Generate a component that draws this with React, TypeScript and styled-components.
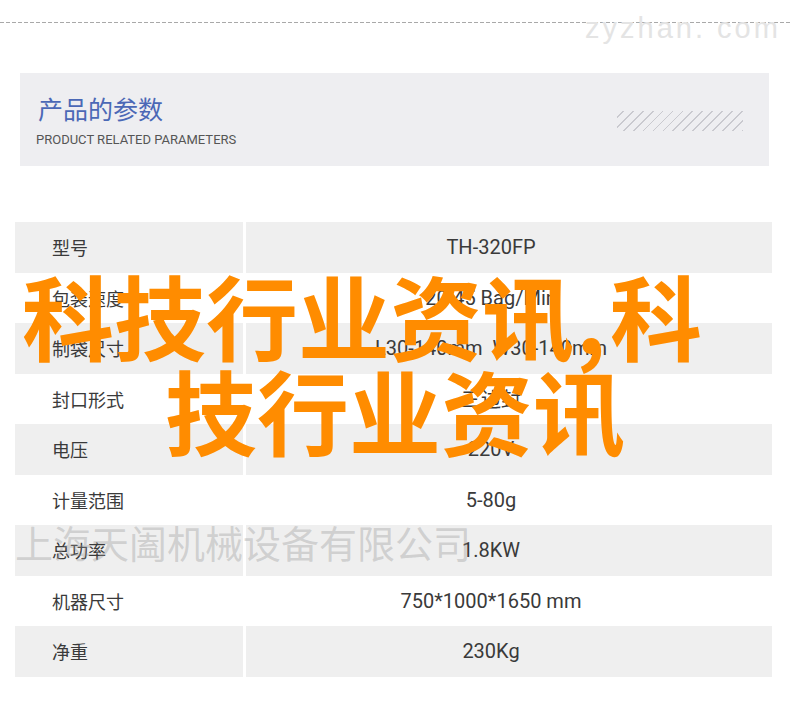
import styled, { createGlobalStyle } from 'styled-components';

const GlobalStyle = createGlobalStyle`
  html, body {
    margin: 0;
    padding: 0;
    background: #fff;
  }
  body {
    font-family: "Noto Sans CJK SC", "Noto Sans", sans-serif;
  }
`;

type Param = { label: string; value: string };

const params: Param[] = [
  { label: '型号', value: 'TH-320FP' },
  { label: '包装速度', value: '20-45 Bag/Min' },
  { label: '制袋尺寸', value: 'L30-140mm  W30-140mm' },
  { label: '封口形式', value: '三边封' },
  { label: '电压', value: '220V' },
  { label: '计量范围', value: '5-80g' },
  { label: '总功率', value: '1.8KW' },
  { label: '机器尺寸', value: '750*1000*1650 mm' },
  { label: '净重', value: '230Kg' },
];

const Page = styled.div`
  position: relative;
  width: 790px;
  height: 715px;
  overflow: hidden;
  padding-top: 22px;
  box-sizing: border-box;
`;

const DashedRule = styled.div`
  height: 1px;
  background: repeating-linear-gradient(90deg, #a9a9a9 0 4px, transparent 4px 6px);
`;

const SiteMark = styled.div`
  position: absolute;
  top: 14px;
  left: 585px;
  font-family: "Liberation Sans", Arial, sans-serif;
  font-size: 29px;
  line-height: 1;
  letter-spacing: 3px;
  color: #e4e4e4;
  white-space: pre;
`;

const HeaderPanel = styled.section`
  margin: 50px 21px 0 20px;
  height: 93px;
  background: #eeeef1;
  display: flex;
  align-items: center;
  justify-content: space-between;
  padding: 0 26px 0 16px;
  box-sizing: border-box;
`;

const HeaderText = styled.div`
  display: flex;
  flex-direction: column;
  margin-top: 2px;
`;

const Title = styled.h2`
  margin: 0 0 0 2px;
  font-size: 25px;
  font-weight: 400;
  line-height: 30px;
  color: #4b68b6;
`;

const Subtitle = styled.div`
  margin-top: 9px;
  font-family: Roboto, "Liberation Sans", sans-serif;
  font-size: 13px;
  line-height: 16px;
  color: #555;
`;

const Hatch = styled.div`
  width: 126px;
  height: 20px;
  margin-top: 2px;
  background: repeating-linear-gradient(
    135deg,
    transparent 0 4px,
    #c9c9cf 4px 5.2px,
    transparent 5.2px 7px
  );
`;

const Table = styled.div`
  margin: 56px 18px 0 15px;
  display: flex;
  flex-direction: column;
`;

const Row = styled.div<{ $shaded: boolean }>`
  display: grid;
  grid-template-columns: 228px 526px;
  column-gap: 3px;
  height: 50.5px;
  & > div {
    background: ${(p) => (p.$shaded ? '#efefef' : '#fff')};
  }
`;

const LabelCell = styled.div`
  display: flex;
  align-items: center;
  padding-left: 37px;
  font-size: 18px;
  color: #3a3a3a;
`;

const ValueCell = styled.div`
  display: flex;
  align-items: center;
  justify-content: center;
  padding-right: 36px;
  font-family: Roboto, "Noto Sans CJK SC", sans-serif;
  font-size: 20px;
  color: #3a3a3a;
  white-space: pre;
`;

const CompanyMark = styled.div`
  position: absolute;
  left: 15px;
  top: 523px;
  font-size: 38px;
  line-height: 1;
  color: rgba(150, 150, 150, 0.36);
  white-space: nowrap;
`;

const Overlay = styled.div`
  position: absolute;
  left: 0;
  top: 266px;
  width: 790px;
  font-size: 92px;
  font-weight: 700;
  line-height: 95px;
  color: #ff8c00;
  white-space: nowrap;
`;

const OverlayLine = styled.div<{ $indent: number }>`
  padding-left: ${(p) => p.$indent}px;
`;

const Comma = styled.span`
  margin: 0 4px 0 2px;
`;

export default function App() {
  return (
    <>
      <GlobalStyle />
      <Page>
        <DashedRule />
        <SiteMark>zyzhan. com</SiteMark>
        <HeaderPanel>
          <HeaderText>
            <Title>产品的参数</Title>
            <Subtitle>PRODUCT RELATED PARAMETERS</Subtitle>
          </HeaderText>
          <Hatch />
        </HeaderPanel>
        <Table>
          {params.map((p, i) => (
            <Row key={p.label} $shaded={i % 2 === 0}>
              <LabelCell>{p.label}</LabelCell>
              <ValueCell>{p.value}</ValueCell>
            </Row>
          ))}
        </Table>
        <CompanyMark>上海天阖机械设备有限公司</CompanyMark>
        <Overlay>
          <OverlayLine $indent={22}>科技行业资讯<Comma>,</Comma>科</OverlayLine>
          <OverlayLine $indent={165}>技行业资讯</OverlayLine>
        </Overlay>
      </Page>
    </>
  );
}
